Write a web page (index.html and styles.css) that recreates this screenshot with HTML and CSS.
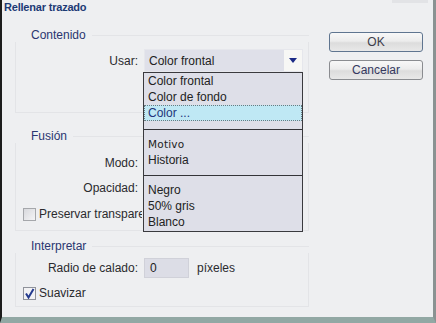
FILE: index.html
```html
<!DOCTYPE html>
<html lang="es">
<head>
<meta charset="utf-8">
<title>Rellenar trazado</title>
<link rel="stylesheet" href="styles.css">
</head>
<body>
<div class="dialog">
  <div class="corner-mark"></div>
  <div class="title">Rellenar trazado</div>
  <div class="main">
    <div class="groups">
      <section class="group group-content">
        <div class="group-head"><span class="group-label">Contenido</span><span class="group-line"></span></div>
        <div class="group-body">
          <div class="field">
            <label class="field-label">Usar:</label>
            <div class="select-wrap">
              <div class="select">
                <span class="select-value">Color frontal</span>
                <span class="select-arrow"><svg width="8" height="5" viewBox="0 0 8 5"><path d="M0 0H8L4 5Z" fill="#1b2a86"/></svg></span>
              </div>
              <div class="menu">
                <div class="menu-sec sec-1">
                  <div class="menu-item">Color frontal</div>
                  <div class="menu-item">Color de fondo</div>
                  <div class="menu-item selected">Color ...</div>
                </div>
                <div class="menu-sec sec-2">
                  <div class="menu-item small">Motivo</div>
                  <div class="menu-item">Historia</div>
                </div>
                <div class="menu-sec sec-3">
                  <div class="menu-item">Negro</div>
                  <div class="menu-item">50% gris</div>
                  <div class="menu-item">Blanco</div>
                </div>
              </div>
            </div>
          </div>
        </div>
      </section>

      <section class="group group-blend">
        <div class="group-head"><span class="group-label">Fusión</span><span class="group-line"></span></div>
        <div class="group-body">
          <div class="field row22">
            <label class="field-label">Modo:</label>
            <div class="select small-select"></div>
          </div>
          <div class="field row22">
            <label class="field-label">Opacidad:</label>
            <div class="input"></div>
          </div>
          <div class="check-row">
            <span class="checkbox"></span>
            <span class="check-label clipped">Preservar transparencia</span>
          </div>
        </div>
      </section>

      <section class="group group-render">
        <div class="group-head"><span class="group-label">Interpretar</span><span class="group-line"></span></div>
        <div class="group-body">
          <div class="field radius">
            <label class="field-label">Radio de calado:</label>
            <div class="input">0</div>
            <span class="unit">píxeles</span>
          </div>
          <div class="check-row check-smooth">
            <span class="checkbox checked"><svg width="11" height="11" viewBox="0 0 11 11"><path d="M2 5.5L4.5 9.5L9.5 1" fill="none" stroke="#243a8e" stroke-width="2"/></svg></span>
            <span class="check-label">Suavizar</span>
          </div>
        </div>
      </section>
    </div>

    <div class="buttons">
      <div class="btn btn-default">OK</div>
      <div class="btn">Cancelar</div>
    </div>
  </div>
</div>
</body>
</html>
```

FILE: styles.css
```css
html, body {
  margin: 0;
  padding: 0;
}
body {
  width: 436px;
  height: 323px;
  overflow: hidden;
  background: #eeeff1;
  font-family: "Liberation Sans", Arial, sans-serif;
  font-size: 12px;
  color: #2a2a2e;
}
.dialog {
  position: relative;
  box-sizing: border-box;
  width: 436px;
  height: 323px;
  border-left: 2px solid #1c1c1c;
  border-right: 3px solid #8a9292;
  border-bottom: 6px solid #92a8a4;
  background: #eeeff1;
  display: flex;
  flex-direction: column;
}
.corner-mark {
  position: absolute;
  top: 0;
  left: 390px;
  width: 36px;
  height: 3px;
  background: #e2e3e6;
}
.title {
  height: 14px;
  line-height: 14px;
  padding-left: 2px;
  font-weight: bold;
  font-size: 11px;
  letter-spacing: -0.2px;
  color: #1d3a75;
}
.main {
  display: flex;
  padding-top: 14px;
}
.groups {
  margin-left: 13px;
  width: 294px;
  display: flex;
  flex-direction: column;
}
.group-head {
  display: flex;
  align-items: center;
  height: 14px;
}
.group-label {
  padding-left: 16px;
  padding-right: 6px;
  color: #2a3670;
  line-height: 14px;
}
.group-line {
  flex: 1;
  border-top: 1px solid #e3e4e7;
}
.group-body {
  border: 1px solid #e3e4e7;
  border-top: none;
}
.group-content .group-body {
  padding-top: 7px;
  height: 63px;
}
.group-blend {
  margin-top: 16px;
}
.group-blend .group-body {
  padding-top: 8px;
  height: 79px;
}
.group-render {
  margin-top: 8px;
}
.group-render .group-body {
  padding-top: 5px;
  height: 48px;
}
.field {
  display: grid;
  grid-template-columns: 122px auto auto;
  justify-content: start;
  column-gap: 6px;
  align-items: center;
  height: 23px;
}
.row22 {
  height: 22px;
  margin-bottom: 4px;
}
.field-label {
  text-align: right;
  color: #2a2a2e;
}
.select-wrap {
  position: relative;
}
.select {
  box-sizing: border-box;
  width: 159px;
  height: 23px;
  background: #dfe0e9;
  display: flex;
  align-items: center;
  justify-content: space-between;
  border: 1px solid #e6e7ec;
}
.select-value {
  padding-left: 4px;
  color: #222;
}
.select-arrow {
  width: 18px;
  height: 21px;
  background: #f7f7f5;
  display: flex;
  align-items: center;
  justify-content: center;
}
.menu {
  position: absolute;
  left: -1px;
  top: 23px;
  box-sizing: border-box;
  width: 160px;
  height: 160px;
  background: #dedfe8;
  border: 1px solid #3a3a3e;
  z-index: 2;
}
.menu-item {
  height: 16px;
  line-height: 16px;
  padding-left: 4px;
  color: #222;
}
.menu-item.small {
  font-family: "DejaVu Sans", Verdana, sans-serif;
  font-size: 10.5px;
  letter-spacing: 0.2px;
}
.menu-item.selected {
  box-sizing: border-box;
  background: #bfe8f4;
  border: 1px dotted #6a7a80;
  line-height: 14px;
  padding-left: 3px;
  color: #22357a;
}
.menu-sec {
  border-bottom: 1px solid #343438;
}
.sec-1 {
  padding-bottom: 8px;
}
.sec-2 {
  padding-top: 6px;
  padding-bottom: 7px;
}
.sec-3 {
  padding-top: 6px;
  border-bottom: none;
}
.small-select {
  width: 100px;
}
.input {
  box-sizing: border-box;
  width: 45px;
  height: 20px;
  line-height: 18px;
  background: #dcdde6;
  border: 1px solid #d0d1d9;
  padding-left: 5px;
  color: #222;
}
.radius {
  height: 20px;
  column-gap: 6px;
}
.unit {
  margin-left: 2px;
}
.check-row {
  display: flex;
  align-items: center;
  height: 22px;
  padding-left: 7px;
}
.check-smooth {
  margin-top: 9px;
  height: 12px;
}
.checkbox {
  box-sizing: border-box;
  flex: none;
  width: 13px;
  height: 13px;
  border: 1px solid #a5a7ab;
  background: linear-gradient(135deg, #d8d9dd, #f4f4f6);
  display: flex;
  align-items: center;
  justify-content: center;
}
.checkbox.checked {
  border-color: #8f929a;
  background: #f2f2f4;
}
.check-label {
  margin-left: 3px;
  white-space: nowrap;
}
.check-label.clipped {
  width: 103px;
  overflow: hidden;
}
.buttons {
  margin-left: 20px;
  padding-top: 4px;
  width: 94px;
  display: flex;
  flex-direction: column;
  gap: 8px;
}
.btn {
  box-sizing: border-box;
  height: 20px;
  line-height: 18px;
  text-align: center;
  border: 1px solid #8a8c90;
  border-radius: 3px;
  background: linear-gradient(#f8f8f8 0%, #ececec 45%, #dcdcdc 55%, #e8e8e8 100%);
  color: #34385e;
}
.btn-default {
  border-color: #5f7590;
  color: #3c3c4a;
}
```
